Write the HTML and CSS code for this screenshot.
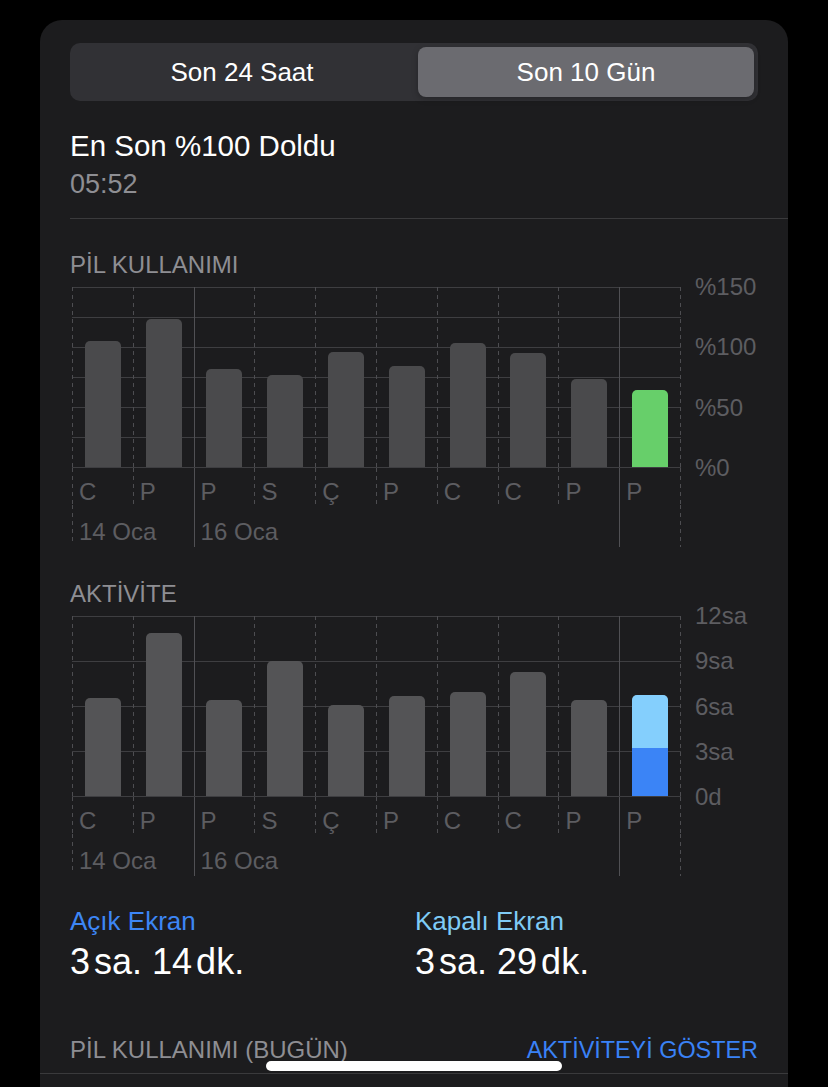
FILE: index.html
```html
<!DOCTYPE html>
<html lang="tr">
<head>
    <meta charset="UTF-8">
    <meta name="viewport" content="width=device-width, initial-scale=1.0">
    <title>Pil</title>
    <link rel="stylesheet" href="styles.css">
</head>
<body>
    <div class="card">
        <div class="segmented">
            <div class="segment">Son 24 Saat</div>
            <div class="segment active">Son 10 Gün</div>
        </div>

        <div class="last-charge">
            <div class="last-title">En Son %100 Doldu</div>
            <div class="last-time">05:52</div>
        </div>
        <div class="divider"></div>

        <div class="chart chart-battery">
            <div class="section-title">PİL KULLANIMI</div>
            <div class="chart-body">
                <div class="chart-grid">
                    <div class="plot">
                        <div class="col"><div class="bar" style="height:126px"></div></div>
                        <div class="col"><div class="bar" style="height:148px"></div></div>
                        <div class="col week"><div class="bar" style="height:98px"></div></div>
                        <div class="col"><div class="bar" style="height:92px"></div></div>
                        <div class="col"><div class="bar" style="height:115px"></div></div>
                        <div class="col"><div class="bar" style="height:101px"></div></div>
                        <div class="col"><div class="bar" style="height:124px"></div></div>
                        <div class="col"><div class="bar" style="height:114px"></div></div>
                        <div class="col"><div class="bar" style="height:88px"></div></div>
                        <div class="col week"><div class="bar green" style="height:77px"></div></div>
                    </div>
                    <div class="days">
                        <div class="day">C</div>
                        <div class="day">P</div>
                        <div class="day week">P</div>
                        <div class="day">S</div>
                        <div class="day">Ç</div>
                        <div class="day">P</div>
                        <div class="day">C</div>
                        <div class="day">C</div>
                        <div class="day">P</div>
                        <div class="day week">P</div>
                    </div>
                    <div class="dates">
                        <div class="date date-a">14 Oca</div>
                        <div class="date date-b">16 Oca</div>
                        <div class="date date-c"></div>
                    </div>
                </div>
                <div class="axis">
                    <span>%150</span>
                    <span>%100</span>
                    <span>%50</span>
                    <span>%0</span>
                </div>
            </div>
        </div>

        <div class="chart chart-activity">
            <div class="section-title">AKTİVİTE</div>
            <div class="chart-body">
                <div class="chart-grid">
                    <div class="plot">
                        <div class="col"><div class="bar" style="height:98px"></div></div>
                        <div class="col"><div class="bar" style="height:163px"></div></div>
                        <div class="col week"><div class="bar" style="height:96px"></div></div>
                        <div class="col"><div class="bar" style="height:135px"></div></div>
                        <div class="col"><div class="bar" style="height:91px"></div></div>
                        <div class="col"><div class="bar" style="height:100px"></div></div>
                        <div class="col"><div class="bar" style="height:104px"></div></div>
                        <div class="col"><div class="bar" style="height:124px"></div></div>
                        <div class="col"><div class="bar" style="height:96px"></div></div>
                        <div class="col week">
                            <div class="bar split">
                                <div class="screen-off" style="height:53px"></div>
                                <div class="screen-on" style="height:48px"></div>
                            </div>
                        </div>
                    </div>
                    <div class="days">
                        <div class="day">C</div>
                        <div class="day">P</div>
                        <div class="day week">P</div>
                        <div class="day">S</div>
                        <div class="day">Ç</div>
                        <div class="day">P</div>
                        <div class="day">C</div>
                        <div class="day">C</div>
                        <div class="day">P</div>
                        <div class="day week">P</div>
                    </div>
                    <div class="dates">
                        <div class="date date-a">14 Oca</div>
                        <div class="date date-b">16 Oca</div>
                        <div class="date date-c"></div>
                    </div>
                </div>
                <div class="axis">
                    <span>12sa</span>
                    <span>9sa</span>
                    <span>6sa</span>
                    <span>3sa</span>
                    <span>0d</span>
                </div>
            </div>
        </div>

        <div class="stats">
            <div class="stat">
                <div class="stat-label on">Açık Ekran</div>
                <div class="stat-value">3<span class="unit">sa.</span> 14<span class="unit">dk.</span></div>
            </div>
            <div class="stat">
                <div class="stat-label off">Kapalı Ekran</div>
                <div class="stat-value">3<span class="unit">sa.</span> 29<span class="unit">dk.</span></div>
            </div>
        </div>

        <div class="footer">
            <span class="footer-title">PİL KULLANIMI (BUGÜN)</span>
            <span class="footer-link">AKTİVİTEYİ GÖSTER</span>
        </div>
        <div class="divider full"></div>
    </div>

    <div class="home-indicator"></div>
</body>
</html>
```

FILE: styles.css
```css
* {
    box-sizing: border-box;
}
body, html {
    margin: 0;
    padding: 0;
    background-color: #000;
    font-family: "Liberation Sans", Arial, sans-serif;
    color: #fff;
    overflow: hidden;
}
.card {
    width: 748px;
    margin: 20px 0 0 40px;
    padding: 23px 30px 40px;
    background-color: #1c1c1e;
    border-radius: 22px 22px 0 0;
}
.segmented {
    display: grid;
    grid-template-columns: 1fr 1fr;
    gap: 8px;
    height: 58px;
    padding: 4px;
    background-color: #313135;
    border-radius: 10px;
}
.segment {
    text-align: center;
    font-size: 26px;
    line-height: 50px;
    border-radius: 8px;
}
.segment.active {
    background-color: #6b6b70;
    box-shadow: 0 2px 6px rgba(0, 0, 0, 0.25);
}
.last-charge {
    margin-top: 27px;
}
.last-title {
    font-size: 29.5px;
    line-height: 36px;
}
.last-time {
    margin-top: 3px;
    font-size: 27px;
    line-height: 34px;
    color: #8e8e93;
}
.divider {
    height: 1px;
    margin: 17px -30px 0 0;
    background-color: #3a3a3c;
}
.divider.full {
    margin: 8px -30px 0;
}
.chart-battery {
    margin-top: 31px;
}
.chart-activity {
    margin-top: 32px;
}
.section-title {
    font-size: 24px;
    line-height: 30px;
    color: #8e8e93;
    margin-bottom: 7px;
}
.chart-body {
    display: flex;
    align-items: flex-start;
    margin-left: 2px;
}
.chart-grid {
    width: 609px;
}

/* dashed guide: 4px dash, 4px gap */
.plot, .days, .date-c {
    background: linear-gradient(#4d4d51 50%, transparent 0) right top / 1px 8px repeat-y;
}
.col, .day, .date-a {
    background: linear-gradient(#4d4d51 50%, transparent 0) left top / 1px 8px repeat-y;
}
.col.week, .day.week, .date-b, .date-c {
    border-left: 1px solid #505054;
}
.col.week, .day.week {
    background: none;
}

.plot {
    display: grid;
    grid-template-columns: repeat(10, 1fr);
    height: 181px;
    padding: 0 1px 1px 0;
    background:
        linear-gradient(#4d4d51 50%, transparent 0) right top / 1px 8px repeat-y,
        repeating-linear-gradient(to bottom, #3e3e41 0, #3e3e41 1px, transparent 1px, transparent 30px);
}
.chart-activity .plot {
    background:
        linear-gradient(#4d4d51 50%, transparent 0) right top / 1px 8px repeat-y,
        repeating-linear-gradient(to bottom, #3e3e41 0, #3e3e41 1px, transparent 1px, transparent 45px);
}
.col {
    display: flex;
    align-items: flex-end;
    justify-content: center;
    padding-left: 1px;
}
.col.week {
    padding-left: 0;
}
.bar {
    width: 36px;
    background-color: #4a4a4c;
    border-radius: 5px 5px 0 0;
}
.chart-activity .bar {
    background-color: #545456;
}
.bar.green {
    background-color: #67cf6a;
}
.bar.split {
    display: flex;
    flex-direction: column;
    overflow: hidden;
}
.screen-off {
    background-color: #84cffd;
}
.screen-on {
    background-color: #3b84f6;
}
.days {
    display: grid;
    grid-template-columns: repeat(10, 1fr);
    height: 37px;
    padding-right: 1px;
}
.day, .date {
    font-size: 24px;
    color: #5d5d61;
    white-space: nowrap;
    padding-left: 7px;
}
.day.week, .date-b {
    padding-left: 6px;
}
.day {
    padding-top: 11px;
    line-height: 26px;
}
.dates {
    display: grid;
    grid-template-columns: repeat(10, 1fr);
    align-items: start;
    height: 42px;
    padding-right: 1px;
}
.date {
    padding-top: 12px;
    line-height: 30px;
}
.date-a {
    grid-column: 1 / 3;
    height: 37px;
}
.date-b {
    grid-column: 3 / 10;
    height: 42px;
}
.date-c {
    grid-column: 10 / 11;
    height: 42px;
    margin-right: -1px;
}
.axis {
    display: flex;
    flex-direction: column;
    justify-content: space-between;
    height: 181px;
    margin-left: 14px;
}
.axis span {
    height: 0;
    line-height: 0;
    font-size: 24px;
    color: #5d5d61;
}
.stats {
    display: grid;
    grid-template-columns: 345px 1fr;
    margin-top: 29px;
}
.stat-label {
    font-size: 26px;
    line-height: 32px;
}
.stat-label.on {
    color: #3d86f5;
}
.stat-label.off {
    color: #7fcbf6;
}
.stat-value {
    margin-top: 3px;
    font-size: 36px;
    line-height: 44px;
}
.stat-value .unit {
    margin-left: 4px;
}
.footer {
    display: flex;
    justify-content: space-between;
    margin-top: 51px;
    font-size: 24px;
    line-height: 30px;
}
.footer-title {
    color: #8e8e93;
}
.footer-link {
    font-size: 23.4px;
    color: #3a82f6;
}
.home-indicator {
    position: fixed;
    left: 266px;
    top: 1061px;
    width: 296px;
    height: 10px;
    border-radius: 5px;
    background-color: #fff;
}
```
